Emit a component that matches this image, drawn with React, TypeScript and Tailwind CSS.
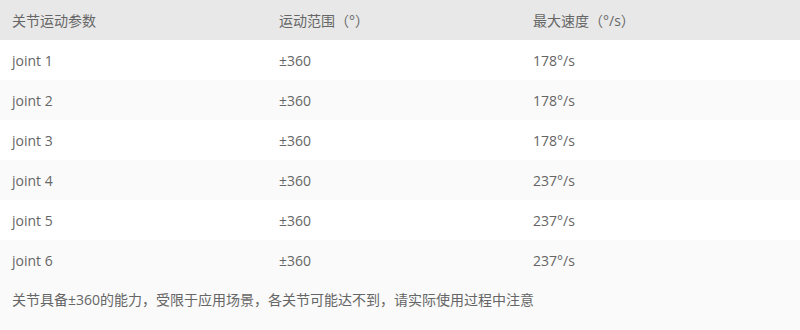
const rows = [
  { name: "joint 1", range: "±360", speed: "178°/s" },
  { name: "joint 2", range: "±360", speed: "178°/s" },
  { name: "joint 3", range: "±360", speed: "178°/s" },
  { name: "joint 4", range: "±360", speed: "237°/s" },
  { name: "joint 5", range: "±360", speed: "237°/s" },
  { name: "joint 6", range: "±360", speed: "237°/s" },
];

export default function App() {
  return (
    <div
      className="w-[800px] h-[330px] bg-[#fafafa] text-[14px] text-[#666666]"
      style={{ fontFamily: '"Open Sans", "Noto Sans CJK SC", sans-serif' }}
    >
      <div className="grid grid-cols-[267px_254px_1fr] h-[40px] items-center bg-[#e8e8e8]">
        <div className="px-3">关节运动参数</div>
        <div className="px-3">运动范围（°）</div>
        <div className="px-3">最大速度（°/s）</div>
      </div>
      {rows.map((r, i) => (
        <div
          key={r.name}
          className={
            "grid grid-cols-[267px_254px_1fr] h-[40px] items-center " +
            (i % 2 === 0 ? "bg-white" : "bg-[#fafafa]")
          }
        >
          <div className="px-3">{r.name}</div>
          <div className="px-3">{r.range}</div>
          <div className="px-3">{r.speed}</div>
        </div>
      ))}
      <div className="px-3 pt-[9px]">
        关节具备±360的能力，受限于应用场景，各关节可能达不到，请实际使用过程中注意
      </div>
    </div>
  );
}
